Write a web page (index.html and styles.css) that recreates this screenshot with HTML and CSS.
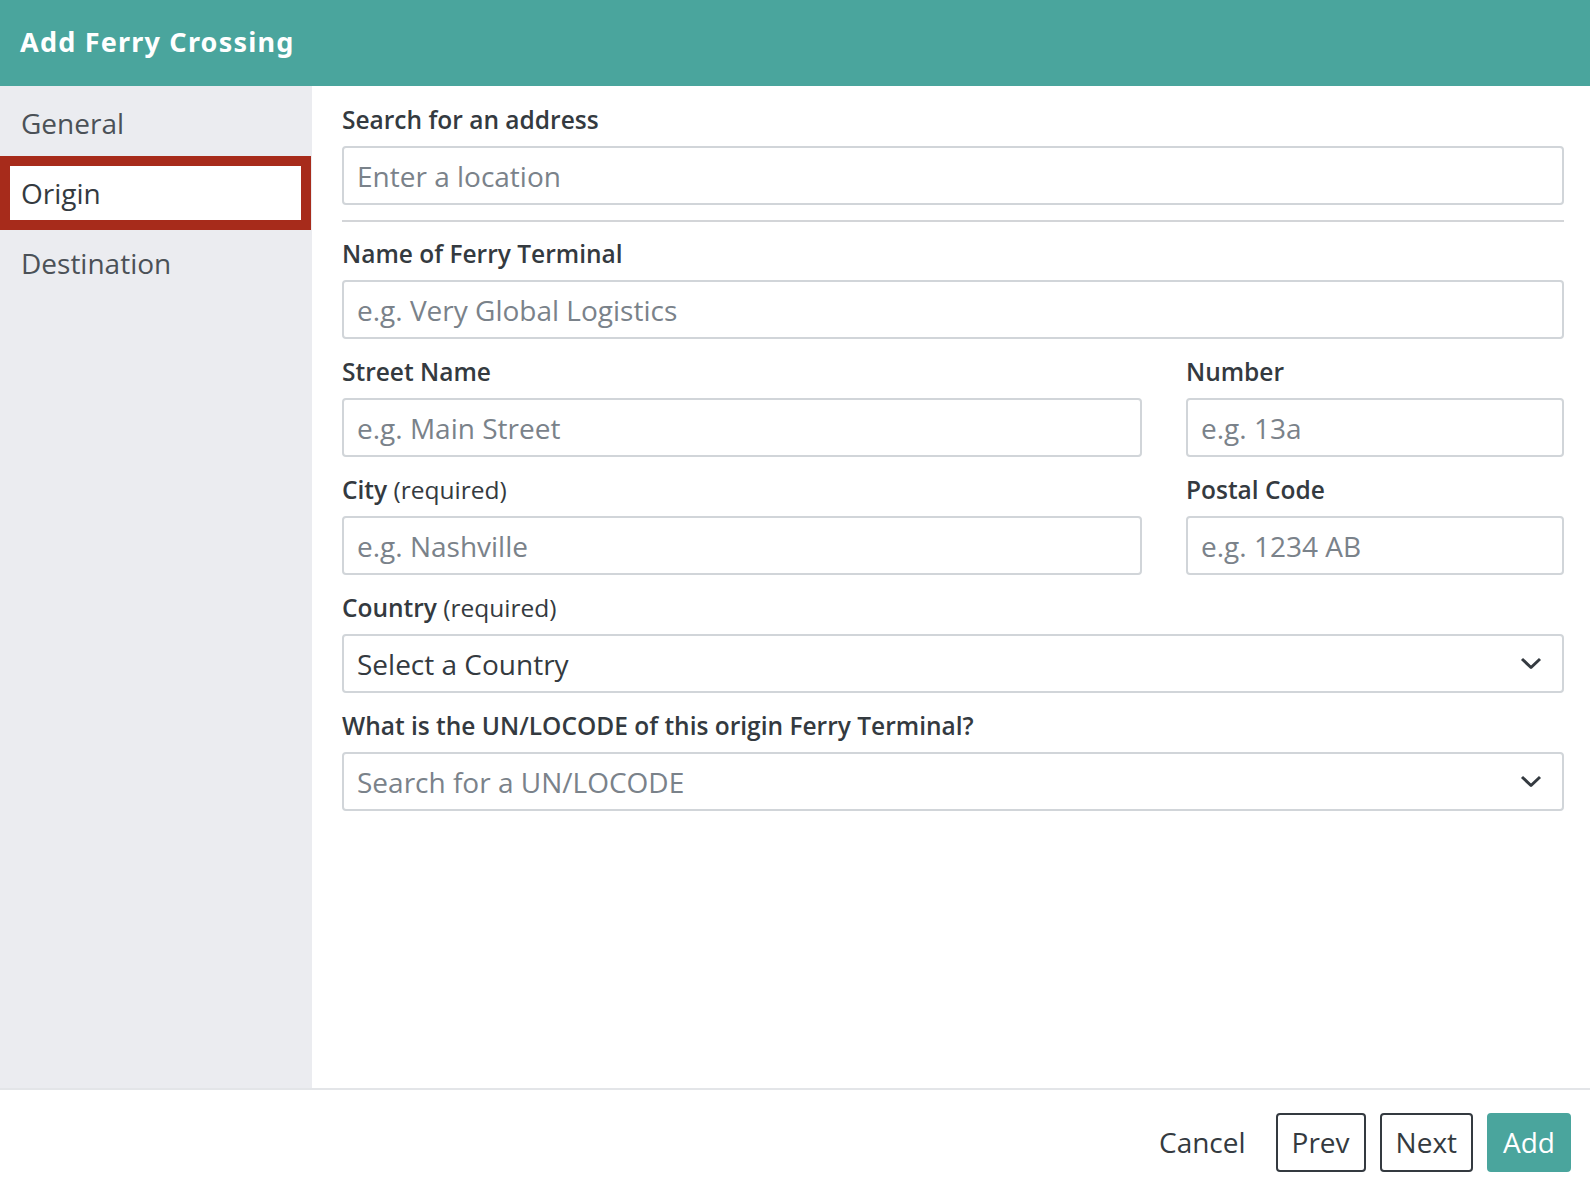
FILE: index.html
```html
<!DOCTYPE html>
<html lang="en">
<head>
    <meta charset="UTF-8">
    <title>Add Ferry Crossing</title>
    <link rel="stylesheet" href="styles.css">
</head>
<body>

    <div class="modal">
        <div class="modal-header">
            <h1>Add Ferry Crossing</h1>
        </div>

        <div class="modal-body">
            <ul class="steps">
                <li>General</li>
                <li class="active">Origin</li>
                <li>Destination</li>
            </ul>

            <div class="form">
                <div class="group">
                    <label>Search for an address</label>
                    <input type="text" placeholder="Enter a location">
                </div>
                <hr>

                <div class="group">
                    <label>Name of Ferry Terminal</label>
                    <input type="text" placeholder="e.g. Very Global Logistics">
                </div>

                <div class="row">
                    <div class="group">
                        <label>Street Name</label>
                        <input type="text" placeholder="e.g. Main Street">
                    </div>
                    <div class="group">
                        <label>Number</label>
                        <input type="text" placeholder="e.g. 13a">
                    </div>
                </div>

                <div class="row">
                    <div class="group">
                        <label>City <span class="hint">(required)</span></label>
                        <input type="text" placeholder="e.g. Nashville">
                    </div>
                    <div class="group">
                        <label>Postal Code</label>
                        <input type="text" placeholder="e.g. 1234 AB">
                    </div>
                </div>

                <div class="group">
                    <label>Country <span class="hint">(required)</span></label>
                    <div class="select">
                        <span class="value">Select a Country</span>
                        <svg class="chevron" width="22" height="13" viewBox="0 0 22 13"><polyline points="2,2 11,10.5 20,2" /></svg>
                    </div>
                </div>

                <div class="group">
                    <label>What is the UN/LOCODE of this origin Ferry Terminal?</label>
                    <div class="select">
                        <span class="placeholder">Search for a UN/LOCODE</span>
                        <svg class="chevron" width="22" height="13" viewBox="0 0 22 13"><polyline points="2,2 11,10.5 20,2" /></svg>
                    </div>
                </div>
            </div>
        </div>

        <div class="modal-footer">
            <button class="btn btn-link">Cancel</button>
            <button class="btn btn-outline">Prev</button>
            <button class="btn btn-outline">Next</button>
            <button class="btn btn-primary">Add</button>
        </div>
    </div>

</body>
</html>
```

FILE: styles.css
```css
* {
    padding: 0;
    margin: 0;
    box-sizing: border-box;
}
body {
    font-family: "Open Sans", "Noto Sans", sans-serif;
    color: #343a40;
    background-color: #fff;
}
ul {
    list-style: none;
}

.modal {
    height: 100vh;
    display: flex;
    flex-direction: column;
}

/* 顶部标题栏 */
.modal-header {
    height: 86px;
    background-color: #4aa59d;
    display: flex;
    align-items: center;
    padding: 0 0 4px 20px;
}
.modal-header h1 {
    font-family: "Noto Sans", "Open Sans", sans-serif;
    font-size: 27px;
    font-weight: 700;
    color: #fff;
    letter-spacing: 1.2px;
}

.modal-body {
    flex: 1;
    display: flex;
}

/* 左侧步骤 */
.steps {
    width: 312px;
    flex-shrink: 0;
    background-color: #ebecf0;
    padding-top: 2px;
}
.steps li {
    height: 70px;
    line-height: 70px;
    padding-left: 21px;
    font-size: 28px;
    color: #4b5157;
}
.steps li.active {
    height: 74px;
    line-height: 54px;
    margin: -2px 1px -2px 0;
    border: 10px solid #a72b1b;
    padding-left: 11px;
    background-color: #fff;
    color: #343a40;
}

/* 表单 */
.form {
    flex: 1;
    padding: 16px 26px 0 30px;
}
.group {
    margin-bottom: 15px;
}
.group label {
    display: block;
    font-size: 24.5px;
    font-weight: 600;
    line-height: 36px;
    margin-bottom: 8px;
    color: #343a40;
}
.group label .hint {
    font-weight: 400;
}
.form hr {
    border: 0;
    height: 2px;
    background-color: #d3d5d8;
    margin: 0 0 14px;
}

.row {
    display: grid;
    grid-template-columns: calc((100% + 44px) * 2 / 3 - 44px) 1fr;
    column-gap: 44px;
}

input,
.select {
    display: block;
    width: 100%;
    height: 59px;
    border: 2px solid #d1d5d9;
    border-radius: 4px;
    padding: 0 13px;
    font-family: "Open Sans", "Noto Sans", sans-serif;
    font-size: 28px;
    color: #343a40;
    background-color: #fff;
    outline: none;
}
input::placeholder {
    color: #7a828a;
}
.select {
    display: flex;
    align-items: center;
    justify-content: space-between;
    padding-right: 20px;
}
.select .placeholder {
    color: #7a828a;
}
.chevron polyline {
    fill: none;
    stroke: #343a40;
    stroke-width: 3;
    stroke-linejoin: round;
}

/* 底部按钮 */
.modal-footer {
    height: 106px;
    border-top: 2px solid #e3e5e8;
    display: flex;
    align-items: center;
    justify-content: flex-end;
    padding-right: 19px;
    gap: 14px;
}
.btn {
    height: 59px;
    padding: 0 14px;
    border: 2px solid transparent;
    border-radius: 4px;
    font-family: "Open Sans", "Noto Sans", sans-serif;
    font-size: 28px;
    color: #343a40;
    background-color: transparent;
    cursor: pointer;
}
.btn-outline {
    border-color: #343a40;
}
.btn-primary {
    background-color: #4aa59d;
    border-color: #4aa59d;
    color: #fff;
}
```
